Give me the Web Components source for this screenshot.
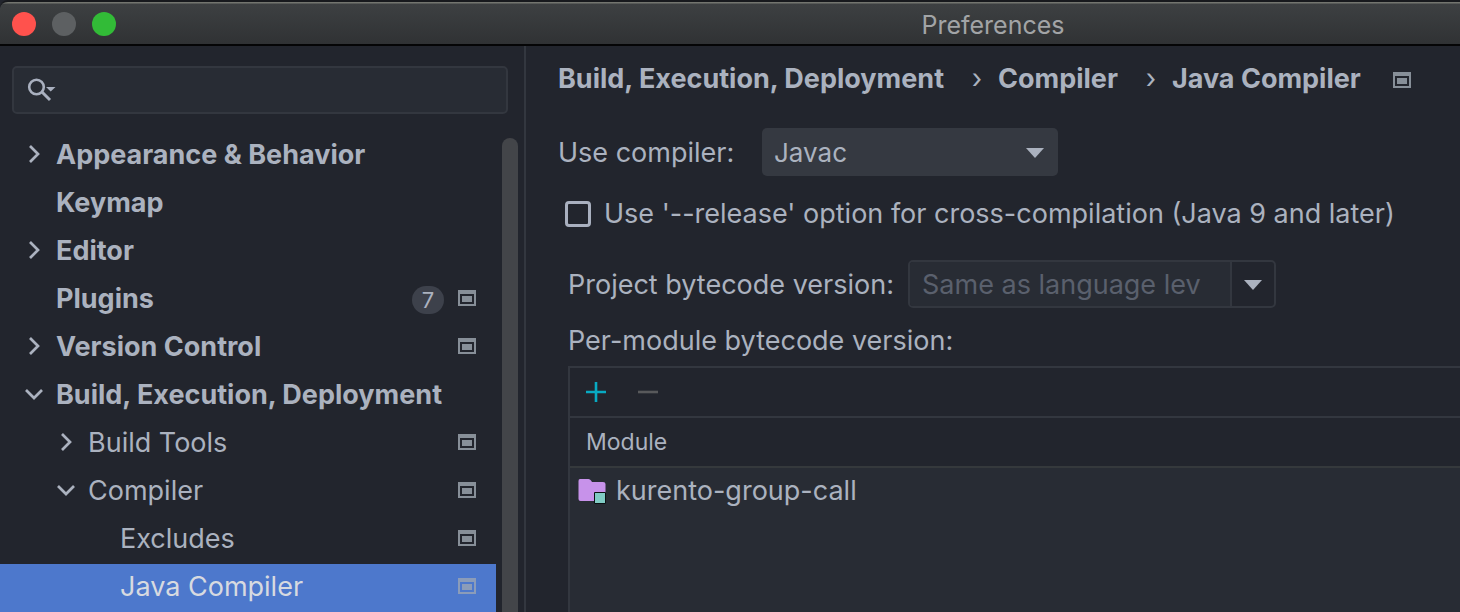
<!DOCTYPE html>
<html lang="en">
<head>
<meta charset="utf-8">
<title>Preferences</title>
<style>
html, body { margin: 0; height: 100%; }
body {
  --bg: #22252d; --field: #282c34; --line: #33373f; --text: #abb2bf; --accent: #4d78cc; --sidebar: 526px;
  background: var(--bg); color: var(--text);
  font: 27px/32px Inter, "Liberation Sans", sans-serif;
  overflow: hidden;
}
</style>
</head>
<body>
<preferences-window></preferences-window>
<script>
function define(name, html) {
  const template = document.createElement('template');
  template.innerHTML = '<style>*{box-sizing:border-box}button,input,select{font:inherit;color:inherit;margin:0}</style>' + html;
  customElements.define(name, class extends HTMLElement {
    constructor() {
      super();
      this.attachShadow({ mode: 'open' }).append(template.content.cloneNode(true));
    }
  });
}

define('scope-icon', `
<style>:host{display:block;flex:none;width:18px;height:16px;color:#878f98}:host([muted]){color:#8b9cb9}svg{display:block}</style>
<svg width="18" height="16" viewBox="0 0 18 16" fill="currentColor" aria-hidden="true"><path fill-rule="evenodd" d="M0 0H18V16H0ZM2 4V14H16V4Z"/><path d="M4 6H14V12H4Z"/></svg>`);

define('title-bar', `
<style>
:host{display:flex;align-items:center;height:46px;padding:2px 0 0 12px;border-top:2px solid #17191d;border-bottom:2px solid #050506;
 border-top-left-radius:8px;background:linear-gradient(#73756f 0,#73756f 1px,#3d4042 2px,#303234 100%);box-sizing:border-box}
.lights{display:flex;gap:16px;width:calc(var(--sidebar) - 12px);flex:none}
button{width:24px;height:24px;border:0;border-radius:50%;padding:0;background:#5d6062}
.close{background:#ff524d}.zoom{background:#32bb37}
h1{flex:1;margin:0;padding-top:2px;font-size:25px;line-height:32px;font-weight:400;text-align:center;color:#a2a4a6}
</style>
<div class="lights"><button class="close" aria-label="Close"></button><button aria-label="Minimize" disabled></button><button class="zoom" aria-label="Zoom"></button></div>
<h1><slot></slot></h1>`);

define('search-field', `
<style>
:host{display:block}
label{display:flex;align-items:center;height:48px;border:2px solid var(--line);border-radius:5px;background:var(--field);padding-left:13px}
svg{flex:none}
input{flex:1;min-width:0;border:0;background:none;outline:0;padding:0 8px}
</style>
<label><svg width="30" height="26" viewBox="0 0 30 26" fill="none" stroke="#a9b0bf" aria-hidden="true"><circle cx="9.500" cy="10" r="7.300" stroke-width="2.600"/><path d="M15 15L23 23" stroke-width="3"/><path d="M19 10H28.500L23.700 14.500Z" fill="#a9b0bf" stroke="none"/></svg>
<input type="text" aria-label="Search preferences"></label>`);

define('tree-item', `
<style>
:host{display:flex;align-items:center;height:48px;padding:0 20px 4px 24px;box-sizing:border-box;font-weight:700}
:host([level="2"]){padding-left:56px;font-weight:400}
:host([level="3"]){padding-left:88px;font-weight:400}
:host([selected]){background:var(--accent);color:#d7dae0}
svg{width:20px;height:20px;margin-right:12px;flex:none;fill:none;stroke:currentColor;stroke-width:2.700;visibility:hidden}
:host([state]) svg{visibility:visible}
:host([state="open"]) svg{transform:rotate(90deg)}
.name{flex:1;padding-top:2px;white-space:nowrap}
::slotted(.badge){width:32px;height:28px;border-radius:14px;background:#3d414b;font:400 22px/28px Inter,sans-serif;text-align:center;margin:4px 14px 0 0}
</style>
<svg viewBox="0 0 20 20" aria-hidden="true"><path d="M6 2L14 10L6 18"/></svg>
<span class="name"><slot></slot></span><slot name="end"></slot>`);

define('settings-sidebar', `
<style>
:host{display:flex;flex-direction:column;border-right:2px solid var(--line);padding-top:20px;box-sizing:border-box;min-height:0}
search-field{margin:0 16px 18px 12px}
.tree{display:flex;flex:1;min-height:0}
nav{flex:1;overflow:hidden}
.bar{width:16px;margin:6px 6px 0;border-radius:8px 8px 0 0;background:#434549}
</style>
<search-field></search-field>
<div class="tree"><nav aria-label="Settings"><slot></slot></nav><div class="bar"></div></div>`);

define('bread-crumbs', `
<style>
:host{display:block}
nav{display:flex;align-items:center;height:32px;font-weight:700;white-space:nowrap}
.sep{width:54px;padding-left:12px;text-align:center;font-weight:400}
scope-icon{margin:2px 0 0 32px}
</style>
<nav aria-label="Breadcrumb"><span>Build, Execution, Deployment</span><span class="sep">›</span><span>Compiler</span><span class="sep">›</span><span>Java Compiler</span><scope-icon></scope-icon></nav>`);

define('compiler-select', `
<style>
:host{display:flex;align-items:center;height:48px}
label{width:204px;padding-top:2px;white-space:nowrap}
.box{display:grid;align-items:center;width:296px}
select,svg{grid-area:1/1}
select{appearance:none;width:100%;height:48px;border:0;border-radius:5px;background:#353941;font-size:26px;padding:2px 48px 0 12px}
svg{justify-self:end;margin:2px 14px 0 0;pointer-events:none}
</style>
<label for="c">Use compiler:</label><div class="box"><select id="c"><option>Javac</option></select><svg width="18" height="10" aria-hidden="true"><path d="M0 0H18L9 10Z" fill="#abb2bf"/></svg></div>`);

define('release-option', `
<style>
:host{display:block}
label{display:flex;align-items:center;height:32px;gap:13px;padding-left:7px;white-space:nowrap}
input{appearance:none;width:26px;height:26px;border:3px solid #a9b0bf;border-radius:4px;flex:none}
</style>
<label><input type="checkbox"><span>Use '--release' option for cross-compilation (Java 9 and later)</span></label>`);

define('bytecode-combo', `
<style>
:host{display:flex;align-items:center;height:48px}
label{width:340px;padding-top:2px;white-space:nowrap}
.combo{display:flex;width:368px;height:48px;border:2px solid var(--line);border-radius:5px;overflow:hidden}
input{flex:1;min-width:0;border:0;outline:0;background:var(--field);padding:2px 12px 0;color:#5a606d}
button{width:44px;border:0;border-left:2px solid var(--line);background:none;padding:2px 0 0;display:grid;place-items:center}
</style>
<label for="v">Project bytecode version:</label><div class="combo"><input id="v" type="text" value="Same as language lev"><button aria-label="Show versions"><svg width="18" height="10" aria-hidden="true"><path d="M0 0H18L9 10Z" fill="#abb2bf"/></svg></button></div>`);

define('module-table', `
<style>
:host{display:flex;flex-direction:column;border:2px solid var(--line);border-right:0;border-bottom:0;background:var(--field);box-sizing:border-box}
.tools{display:flex;gap:32px;height:50px;padding-left:16px;align-items:center;background:var(--bg);border-bottom:2px solid var(--line)}
button{width:20px;height:20px;padding:0;border:0;background:none}
svg{display:block}
table{width:100%;border-collapse:separate;border-spacing:0}
th{height:50px;padding:0 16px;text-align:left;font-weight:400;font-size:23px;background:var(--bg);border-bottom:2px solid #35393c}
td{height:46px;padding:0 8px}
.cell{display:flex;align-items:center;gap:10px}
.cell svg{margin-top:2px}
</style>
<div class="tools"><button aria-label="Add"><svg width="20" height="20"><path d="M10 0V20M0 10H20" stroke="#08aac2" stroke-width="2.600"/></svg></button><button aria-label="Remove" disabled><svg width="20" height="20"><path d="M0 10H20" stroke="#58595b" stroke-width="2.600"/></svg></button></div>
<table><thead><tr><th scope="col">Module</th></tr></thead><tbody><tr><td><div class="cell"><svg width="28" height="26" aria-hidden="true"><path d="M2 0H10.500Q12 0 13 1.500L14 3H25Q27.500 3 27.500 5V22H2.500Q.5 22 .5 20V2Q.5 0 2 0Z" fill="#c792ea"/><path d="M16.500 13.500H27.500V24.500H16.500Z" fill="#80cbc4" stroke="#0b1012"/></svg><span>kurento-group-call</span></div></td></tr></tbody></table>`);

define('compiler-page', `
<style>
:host{display:flex;flex-direction:column;padding:17px 0 0 32px;box-sizing:border-box;min-width:0}
compiler-select{margin-top:33px}
release-option{margin-top:22px}
.section{display:flex;flex-direction:column;flex:1;margin-top:30px;padding-left:10px}
h2{font-size:27px;line-height:32px;font-weight:400;margin:17px 0 9px}
module-table{flex:1}
</style>
<bread-crumbs></bread-crumbs><compiler-select></compiler-select><release-option></release-option>
<div class="section"><bytecode-combo></bytecode-combo><h2>Per-module bytecode version:</h2><module-table></module-table></div>`);

define('preferences-window', `
<style>
:host{display:grid;grid-template:auto 1fr/var(--sidebar) 1fr;height:100vh}
title-bar{grid-column:1/-1}
</style>
<title-bar>Preferences</title-bar>
<settings-sidebar>
<tree-item state="closed">Appearance &amp; Behavior</tree-item>
<tree-item>Keymap</tree-item>
<tree-item state="closed">Editor</tree-item>
<tree-item>Plugins<span slot="end" class="badge">7</span><scope-icon slot="end"></scope-icon></tree-item>
<tree-item state="closed">Version Control<scope-icon slot="end"></scope-icon></tree-item>
<tree-item state="open">Build, Execution, Deployment</tree-item>
<tree-item level="2" state="closed">Build Tools<scope-icon slot="end"></scope-icon></tree-item>
<tree-item level="2" state="open">Compiler<scope-icon slot="end"></scope-icon></tree-item>
<tree-item level="3">Excludes<scope-icon slot="end"></scope-icon></tree-item>
<tree-item level="3" selected>Java Compiler<scope-icon slot="end" muted></scope-icon></tree-item>
</settings-sidebar>
<compiler-page></compiler-page>`);
</script>
</body>
</html>
